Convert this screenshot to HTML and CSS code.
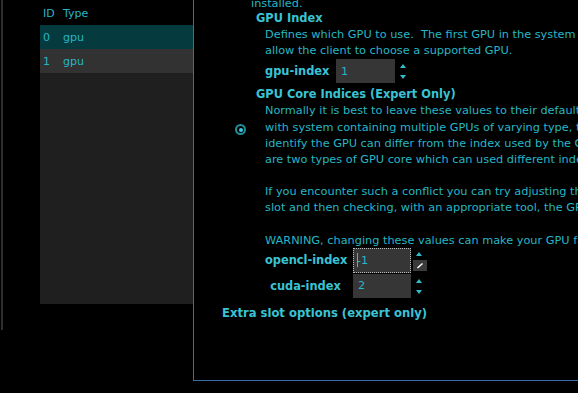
FILE: index.html
```html
<!DOCTYPE html>
<html>
<head>
<meta charset="utf-8">
<link rel="stylesheet" href="styles.css">
</head>
<body>
<div class="app">
  <div class="edge"></div>
  <div class="list">
    <div class="list-head"><span class="c-id">ID</span><span>Type</span></div>
    <div class="row sel"><span class="c-id">0</span><span>gpu</span></div>
    <div class="row alt"><span class="c-id">1</span><span>gpu</span></div>
    <div class="list-fill"></div>
  </div>
  <div class="detail">
    <div class="scroll">
      <div class="option first">
        <div class="radio-col"></div>
        <div class="opt-body">
          <p class="tail">installed.</p>
          <h3 class="head">GPU Index</h3>
          <p class="desc">Defines which GPU to use.&nbsp; The first GPU in the system is index 0. Setting this will<br>allow the client to choose a supported GPU.</p>
          <div class="field single">
            <label class="flabel">gpu-index</label>
            <div class="input"><span>1</span></div>
            <div class="spin"><span class="up"></span><span class="down"></span></div>
          </div>
        </div>
      </div>
      <div class="option second">
        <div class="radio-col"><span class="radio on"></span></div>
        <div class="opt-body">
          <h3 class="head core">GPU Core Indices (Expert Only)</h3>
          <p class="desc gap">Normally it is best to leave these values to their defaults. However<br>with system containing multiple GPUs of varying type, the index used to<br>identify the GPU can differ from the index used by the GPU core. There<br>are two types of GPU core which can used different index values.</p>
          <p class="desc gap">If you encounter such a conflict you can try adjusting these values for this<br>slot and then checking, with an appropriate tool, the GPU in use.</p>
          <p class="desc">WARNING, changing these values can make your GPU fail.</p>
          <div class="fields">
            <label class="flabel">opencl-index</label>
            <div class="input focus"><span class="caret"></span><span>-1</span></div>
            <div class="spin edit"><span class="up"></span><span class="grip"><svg width="8" height="7" viewBox="0 0 8 7"><path d="M1.5 6 L6.5 1.5" stroke="#fff" stroke-width="1.5"/></svg></span></div>
            <label class="flabel">cuda-index</label>
            <div class="input"><span>2</span></div>
            <div class="spin"><span class="up"></span><span class="down"></span></div>
          </div>
        </div>
      </div>
      <h3 class="extra">Extra slot options (expert only)</h3>
    </div>
  </div>
</div>
</body>
</html>
```
FILE: styles.css
```css
html, body {
  margin: 0;
  padding: 0;
  background: #000;
}
body {
  font-family: "DejaVu Sans", Verdana, sans-serif;
  font-size: 11.3px;
  color: #27b6c6;
  width: 578px;
  height: 393px;
  overflow: hidden;
}
.app {
  display: flex;
  height: 393px;
}
.edge {
  width: 2px;
  margin-left: 1px;
  height: 330px;
  background: #2f2f2f;
  flex: none;
}
.list {
  margin-left: 37px;
  width: 153px;
  flex: none;
  display: flex;
  flex-direction: column;
  height: 304px;
  font-size: 11px;
}
.list-head, .row {
  display: flex;
  align-items: center;
  height: 24px;
  padding-left: 3px;
  flex: none;
}
.list-head { height: 25px; padding-top: 2px; box-sizing: border-box; }
.c-id { width: 20px; }
.row.sel { background: #053a3e; }
.row.alt { background: #323232; }
.list-fill { flex: 1; background: #1f1f1f; }
.detail {
  flex: none;
  width: 385px;
  height: 380px;
  border-left: 1px solid #3a6eab;
  border-bottom: 1px solid #3a6eab;
  overflow: hidden;
}
.scroll {
  margin-top: -1px;
  padding-left: 28px;
}
.option {
  display: flex;
  margin-left: 13px;
}
.radio-col {
  width: 16px;
  flex: none;
}
.second .radio-col { padding-top: 41px; }
.radio {
  display: block;
  width: 7px;
  height: 7px;
  border: 2px solid #1f8f9c;
  border-radius: 50%;
  position: relative;
}
.radio.on::after {
  content: "";
  position: absolute;
  left: 1.5px; top: 1.5px;
  width: 4px; height: 4px;
  border-radius: 50%;
  background: #3cc8d8;
}
.opt-body { flex: 1; white-space: nowrap; }
p, h3 { margin: 0; }
.tail { line-height: 10px; }
.head {
  font-size: 11.4px;
  font-weight: bold;
  color: #3ac3d5;
  margin-left: 5px;
  line-height: 18px;
}
.head.core { margin-top: 2px; }
.desc {
  margin-left: 14px;
  line-height: 16.2px;
}
.desc.gap { margin-bottom: 16px; }
.field.single, .fields {
  display: grid;
  align-items: center;
  margin-left: 14px;
}
.field.single {
  grid-template-columns: 71px 59px auto;
}
.fields {
  grid-template-columns: 88px 58px auto;
  row-gap: 1px;
  margin-top: -1px;
}
.fields .input.focus { height: 25px; }
.flabel {
  font-size: 11.4px;
  font-weight: bold;
  color: #3ac3d5;
}
.fields .flabel { text-align: center; padding-right: 7px; }
.input {
  height: 24px;
  background: #363636;
  display: flex;
  align-items: center;
  padding-left: 5px;
  box-sizing: border-box;
  position: relative;
}
.input.focus { outline: 1px dotted #bbb; outline-offset: -1px; padding-left: 4px; }
.caret {
  position: absolute;
  left: 4px; top: 5px;
  width: 1px; height: 14px;
  background: #2fbfcf;
}
.spin {
  display: flex;
  flex-direction: column;
  align-items: flex-start;
  align-self: start;
  gap: 7px;
  padding-top: 5px;
  padding-left: 5px;
}
.spin.edit {
  gap: 4px;
  padding-top: 4px;
  padding-left: 2px;
}
.spin .up, .spin .down {
  width: 0; height: 0;
  border-left: 3.5px solid transparent;
  border-right: 3.5px solid transparent;
  flex: none;
}
.spin .up { border-bottom: 4px solid #2fbccb; }
.spin .down { border-top: 4px solid #2fbccb; }
.spin.edit .up { margin-left: 3px; }
.grip {
  display: flex;
  align-items: center;
  justify-content: center;
  width: 14px;
  height: 11px;
  background: #3a3a3a;
}
.extra {
  font-size: 11.6px;
  font-weight: bold;
  color: #3ac3d5;
  margin-top: 6px;
  line-height: 18px;
}
```
